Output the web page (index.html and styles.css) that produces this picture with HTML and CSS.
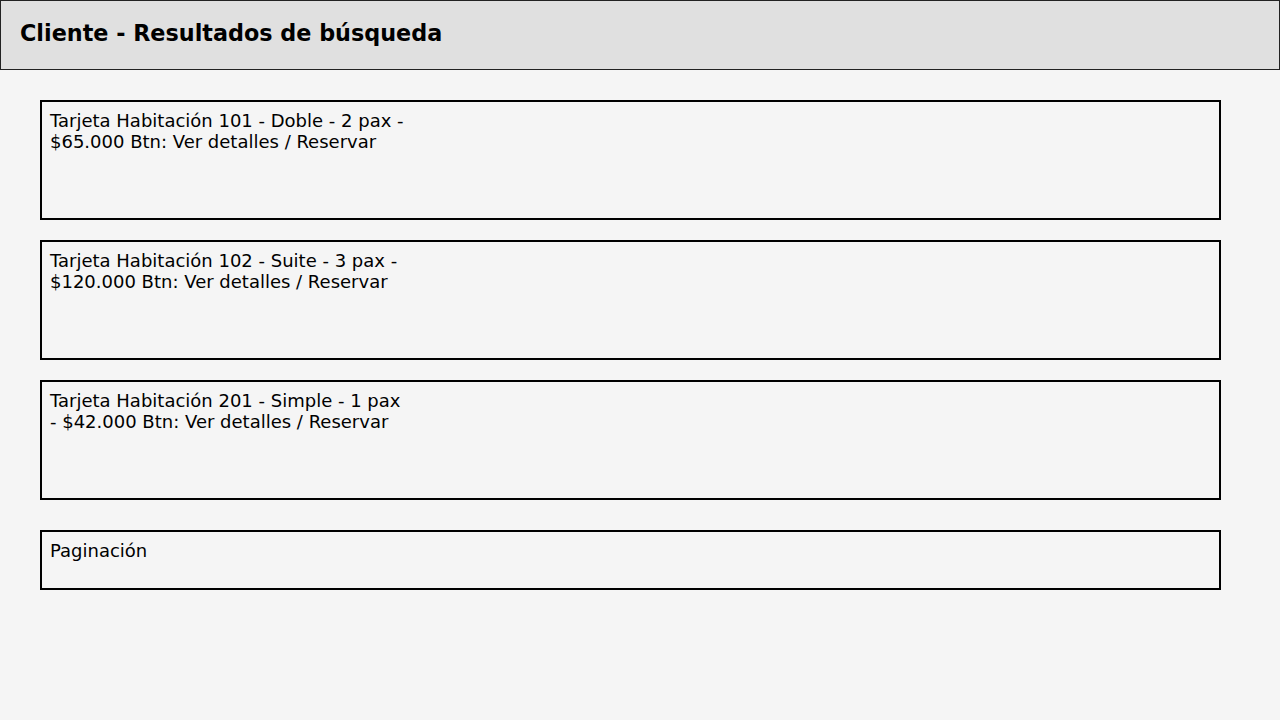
FILE: index.html
```html
<!DOCTYPE html>
<html lang="es">
<head>
    <meta charset="UTF-8">
    <meta name="viewport" content="width=device-width, initial-scale=1.0">
    <title>Cliente - Resultados de búsqueda</title>
    <link rel="stylesheet" href="styles.css">
</head>
<body>
    <header>
        <h1>Cliente - Resultados de búsqueda</h1>
    </header>

    <main class="results">
        <div class="card">
            <p>Tarjeta Habitación 101 - Doble - 2 pax - $65.000 Btn: Ver detalles / Reservar</p>
        </div>
        <div class="card">
            <p>Tarjeta Habitación 102 - Suite - 3 pax - $120.000 Btn: Ver detalles / Reservar</p>
        </div>
        <div class="card">
            <p>Tarjeta Habitación 201 - Simple - 1 pax - $42.000 Btn: Ver detalles / Reservar</p>
        </div>
        <div class="pagination">
            <p>Paginación</p>
        </div>
    </main>
</body>
</html>
```

FILE: styles.css
```css
body {
    font-family: 'DejaVu Sans', sans-serif;
    margin: 0;
    padding: 0;
    color: #000;
    background-color: #f5f5f5;
}
header {
    background-color: #e0e0e0;
    border: 1px solid #222;
    height: 70px;
    box-sizing: border-box;
    padding: 0 19px 4px;
    display: flex;
    align-items: center;
}
header h1 {
    margin: 0;
    font-size: 22.3px;
    font-weight: bold;
}
.results {
    display: flex;
    flex-direction: column;
    gap: 20px;
    padding: 30px 40px;
}
.card, .pagination {
    width: 1181px;
    box-sizing: border-box;
    border: 2px solid #000;
    padding: 8px;
}
.card {
    height: 120px;
}
.pagination {
    height: 60px;
    margin-top: 10px;
}
.card p, .pagination p {
    margin: 0;
    font-size: 18px;
    max-width: 362px;
}
```
